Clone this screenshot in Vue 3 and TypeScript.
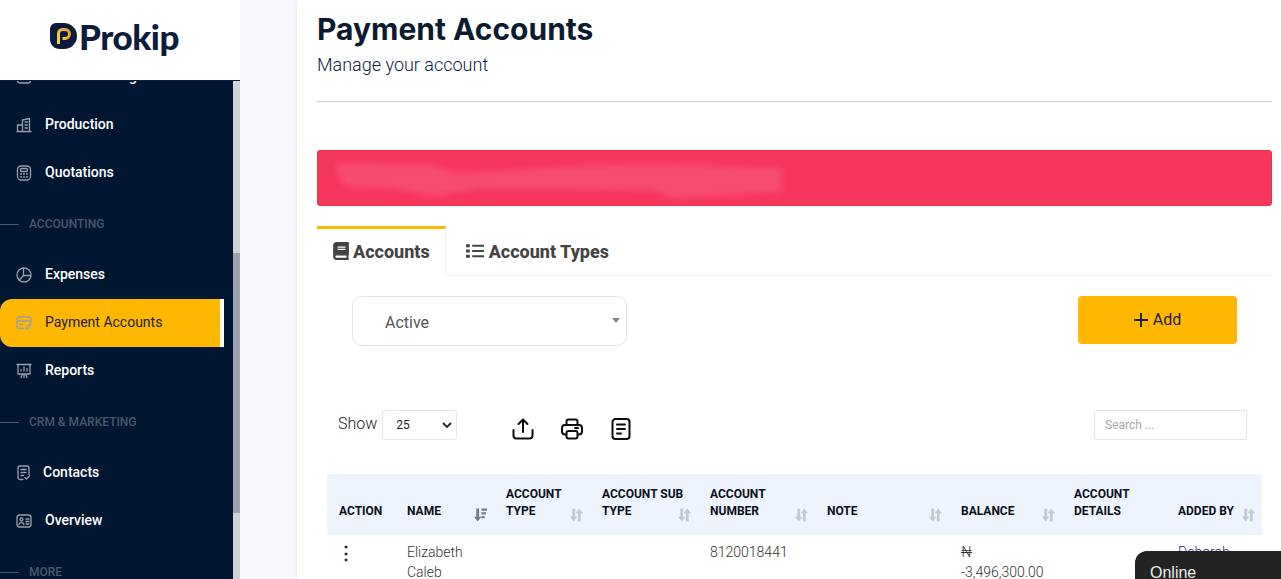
<template>
  <div class="page">
    <aside class="sidebar">
      <div class="brand">
        <svg class="brand-mark" viewBox="0 0 27 27" width="27" height="27">
          <defs>
            <linearGradient id="markFill" x1="0" y1="1" x2="1" y2="0">
              <stop offset="0" stop-color="#f9d838" />
              <stop offset="1" stop-color="#ee9f22" />
            </linearGradient>
          </defs>
          <path d="M0 6a6 6 0 0 1 6-6h8a13 13 0 0 1 13 13 13 13 0 0 1-13 13H10C4 26 0 22 0 16Z" fill="#0c1c3d" />
          <path d="M8.500 21V10.500a4 4 0 0 1 4-4h2.500a4.500 4.500 0 0 1 0 9h-2.500" fill="none" stroke="url(#markFill)" stroke-width="3" />
        </svg>
        <span class="brand-name">Prokip</span>
      </div>
      <div class="nav-wrap">
        <nav class="nav">
          <template v-for="row in navRows" :key="row.label">
            <div v-if="row.section" class="nav-section">
              <span class="nav-section-line"></span>{{ row.label }}
            </div>
            <a v-else class="nav-item" :class="{ active: row.active, tight: row.label === 'Contacts' }">
              <svg class="nav-icon" viewBox="0 0 16 16" width="16" height="16" v-html="row.icon"></svg>
              <span class="nav-label">{{ row.label }}</span>
            </a>
          </template>
        </nav>
        <div class="scroll-track"><div class="scroll-thumb"></div></div>
      </div>
    </aside>

    <div class="gutter"></div>

    <main class="main">
      <header class="head">
        <h1>Payment Accounts</h1>
        <p>Manage your account</p>
      </header>

      <div class="alert">
        <svg class="smear" viewBox="0 0 450 38" width="450" height="38">
          <path d="M2 2 L100 3 L125 12 L240 4 L350 3 L448 6 L448 30 L340 36 L320 28 L150 26 L100 34 L60 26 L10 24 Z" fill="#fff" fill-opacity="0.11" />
        </svg>
      </div>

      <div class="tabs">
        <button class="tab active">
          <svg viewBox="0 0 448 512" width="16" height="18"><path d="M448 360V24c0-13.300-10.700-24-24-24H96C43 0 0 43 0 96v320c0 53 43 96 96 96h328c13.300 0 24-10.700 24-24v-16c0-7.500-3.500-14.300-8.900-18.700-4.200-15.400-4.200-59.300 0-74.700 5.400-4.300 8.900-11.100 8.900-18.600zM128 134c0-3.300 2.700-6 6-6h212c3.300 0 6 2.700 6 6v20c0 3.300-2.700 6-6 6H134c-3.300 0-6-2.700-6-6v-20zm0 64c0-3.300 2.700-6 6-6h212c3.300 0 6 2.700 6 6v20c0 3.300-2.700 6-6 6H134c-3.300 0-6-2.700-6-6v-20zm253.400 250H96c-17.700 0-32-14.300-32-32 0-17.600 14.400-32 32-32h285.400c-1.900 17.100-1.900 46.900 0 64z" fill="#444" /></svg>
          Accounts
        </button>
        <button class="tab">
          <svg viewBox="0 0 20 16" width="19" height="16"><path d="M0 1h4v3H0zM0 6.500h4v3H0zM0 12h4v3H0zM6.500 1.500H19v2H6.500zM6.500 7H19v2H6.500zM6.500 12.500H19v2H6.500z" fill="#444" /></svg>
          Account Types
        </button>
        <div class="tabs-rest"></div>
      </div>

      <div class="filter-row">
        <div class="status-select">
          Active
          <span class="caret"></span>
        </div>
        <button class="add-btn">
          <svg viewBox="0 0 14 14" width="14" height="14"><path d="M7 0v14M0 7h14" stroke="#0c1c3d" stroke-width="1.800" /></svg>
          Add
        </button>
      </div>

      <div class="tools-row">
        <label class="show">
          <span class="show-text">Show</span>
          <span class="show-select">25
            <svg viewBox="0 0 10 6" width="10" height="6"><path d="M1 1l4 4 4-4" fill="none" stroke="#222" stroke-width="1.800" /></svg>
          </span>
        </label>
        <div class="tool-icons">
          <svg viewBox="0 0 22 22" width="22" height="22"><path d="M11 14V2M6.500 6L11 1.500 15.500 6M1.500 12v5.500a3 3 0 0 0 3 3h13a3 3 0 0 0 3-3V12" fill="none" stroke="#0d0d0d" stroke-width="2" stroke-linecap="round" stroke-linejoin="round" /></svg>
          <svg viewBox="0 0 22 22" width="22" height="22"><path d="M5.500 7V3.500a2 2 0 0 1 2-2h7a2 2 0 0 1 2 2V7M5.500 16.500H4a3 3 0 0 1-3-3V10a3 3 0 0 1 3-3h14a3 3 0 0 1 3 3v3.500a3 3 0 0 1-3 3h-1.500M7.500 13h7a2 2 0 0 1 2 2v3.500a2 2 0 0 1-2 2h-7a2 2 0 0 1-2-2V15a2 2 0 0 1 2-2ZM14 10h3" fill="none" stroke="#0d0d0d" stroke-width="2" stroke-linecap="round" /></svg>
          <svg viewBox="0 0 22 22" width="22" height="22"><path d="M5.500 1h11a3 3 0 0 1 3 3v14a3 3 0 0 1-3 3h-11a3 3 0 0 1-3-3V4a3 3 0 0 1 3-3ZM7 6.500h8M7 11h8M7 15.500h4" fill="none" stroke="#0d0d0d" stroke-width="2" stroke-linecap="round" /></svg>
        </div>
        <input class="search" type="text" placeholder="Search ..." />
      </div>

      <table class="accounts">
        <colgroup>
          <col v-for="c in columns" :key="c.label" :style="{ width: c.width + 'px' }" />
        </colgroup>
        <thead>
          <tr>
            <th v-for="c in columns" :key="c.label">
              {{ c.label }}
              <svg v-if="c.sort" class="sort" viewBox="0 0 14 14" width="13" height="14">
                <template v-if="c.sort === 'desc'">
                  <path d="M2.500 0h3v9H8L4 14 0 9h2.500Z" fill="#737a86" />
                  <path d="M8 0h6v2.500H8ZM8 4h4.800v2.500H8ZM8 8h3.400v2.500H8Z" fill="#737a86" />
                </template>
                <template v-else>
                  <path d="M2.500 0h3v9H8L4 14 0 9h2.500Z" fill="#c3c9d3" />
                  <path d="M8.500 14h3V5H14L10 0 6 5h2.500Z" fill="#c3c9d3" />
                </template>
              </svg>
            </th>
          </tr>
        </thead>
        <tbody>
          <tr>
            <td class="dots">⋮</td>
            <td>Elizabeth Caleb</td>
            <td></td>
            <td></td>
            <td>8120018441</td>
            <td></td>
            <td><s class="naira">₦</s><br />-3,496,300.00</td>
            <td></td>
            <td class="added">Deborah</td>
          </tr>
        </tbody>
      </table>
    </main>

    <div class="chat-tab">Online</div>
  </div>
</template>

<script setup lang="ts">
type NavRow = { label: string; section?: boolean; active?: boolean; icon?: string };

const s = 'fill="none" stroke="currentColor" stroke-width="1.300" stroke-linecap="round" stroke-linejoin="round"';

const navRows: NavRow[] = [
  { label: "Manufacturing", icon: `<rect x="1.500" y="2" width="13" height="12" rx="2.500" ${s}/>` },
  { label: "Production", icon: `<path d="M1.500 14.500V8h5v6.500M6.500 14.500V3l7-1.500v13ZM1 14.500h14M9 5h2.500M9 8h2.500M9 11h2.500" ${s}/>` },
  { label: "Quotations", icon: `<rect x="1.500" y="1" width="13" height="14" rx="3.500" ${s}/><rect x="4.500" y="3.500" width="7" height="3" rx="1" ${s}/><path d="M4.500 9h1M7.500 9h1M10.500 9h1M4.500 12h1M7.500 12h1M10.500 12h1" ${s}/>` },
  { label: "ACCOUNTING", section: true },
  { label: "Expenses", icon: `<circle cx="8" cy="8" r="7" ${s}/><path d="M7.500 1.500V8.500L3 13.500M7.500 8.500L14.500 8.500" ${s}/>` },
  { label: "Payment Accounts", active: true, icon: `<path d="M7.500 13.500H3A2 2 0 0 1 1 11.500V4a2 2 0 0 1 2-2h10a2 2 0 0 1 2 2v4M1 6h14M3.500 9.500h3M10 14l.5-2 3-3 1.500 1.500-3 3Z" ${s}/>` },
  { label: "Reports", icon: `<path d="M1 1.500h14M2 1.500v9.500h12V1.500M5 8V6.500M8 8V4M11 8V5.500M8 11v3.500M5 14.500l1.500-3.500M11 14.500L9.500 11" ${s}/>` },
  { label: "CRM & MARKETING", section: true },
  { label: "Contacts", icon: `<path d="M7 14.500H4A2 2 0 0 1 2 12.500V3a2 2 0 0 1 2-2h7a2 2 0 0 1 2 2v6.500M5 4.500h5M5 7.500h5M5 10.500h2.500M9 12.500l1.500 1.500 3-3" ${s}/>` },
  { label: "Overview", icon: `<rect x="1" y="2" width="14" height="12" rx="2.500" ${s}/><circle cx="5.500" cy="6.500" r="1.500" ${s}/><path d="M3 11.500c.5-2.500 4.500-2.500 5 0M10 6h3M10 8.500h3M10 11h3" ${s}/>` },
  { label: "MORE", section: true },
];

const columns = [
  { label: "ACTION", width: 68, sort: "" },
  { label: "NAME", width: 99, sort: "desc" },
  { label: "ACCOUNT TYPE", width: 96, sort: "both" },
  { label: "ACCOUNT SUB TYPE", width: 108, sort: "both" },
  { label: "ACCOUNT NUMBER", width: 117, sort: "both" },
  { label: "NOTE", width: 134, sort: "both" },
  { label: "BALANCE", width: 113, sort: "both" },
  { label: "ACCOUNT DETAILS", width: 104, sort: "" },
  { label: "ADDED BY", width: 96, sort: "both" },
];
</script>

<style>
html,
body {
  margin: 0;
  overflow: hidden;
}
</style>

<style scoped>
.page {
  position: relative;
  display: flex;
  height: 579px;
  overflow: hidden;
  font-family: Roboto, "Liberation Sans", sans-serif;
  background: #f7f8fd;
}

.sidebar {
  flex: 0 0 240px;
  display: flex;
  flex-direction: column;
}

.brand {
  flex: 0 0 80px;
  box-sizing: border-box;
  display: flex;
  align-items: center;
  gap: 2px;
  padding: 0 0 8px 50px;
  background: #fff;
}

.brand-mark {
  margin-top: 1px;
}

.brand-name {
  font-family: Lato, sans-serif;
  font-weight: 900;
  font-size: 35px;
  letter-spacing: -0.5px;
  color: #0c1c3d;
}

.nav-wrap {
  flex: 1;
  display: flex;
  min-height: 0;
  overflow: hidden;
  border-top: 1px solid #0c1c3d;
  background: #011631;
}

.nav {
  flex: 1;
  margin-top: -28px;
  height: 600px;
}

.nav-item {
  display: flex;
  align-items: center;
  height: 48px;
  margin-right: 9px;
  padding-left: 16px;
  box-sizing: border-box;
  color: #fff;
  font-size: 14px;
  font-weight: 500;
}

.nav-label {
  margin-top: -2px;
}

.nav-item.active {
  background: #ffb700;
  color: #1a2233;
  font-weight: 400;
  border-radius: 12px 0 0 12px;
  border-right: 4px solid #fff;
}

.nav-icon {
  flex: none;
  color: #9a9fa9;
  margin-right: 13px;
}

.nav-item.tight .nav-icon {
  margin-right: 11px;
}

.nav-section {
  display: flex;
  align-items: center;
  height: 54px;
  color: #4a5669;
  font-size: 12px;
  font-weight: 500;
}

.nav-section-line {
  width: 19px;
  height: 1px;
  margin-right: 10px;
  background: #4a5669;
}

.scroll-track {
  flex: 0 0 7px;
  background: #d1d3d8;
}

.scroll-thumb {
  height: 260px;
  margin-top: 172px;
  background: #9fa2ae;
}

.gutter {
  flex: 0 0 57px;
}

.main {
  flex: 1;
  min-width: 0;
  padding: 0 9px 0 20px;
  background: #fff;
  box-shadow: -2px 0 4px rgba(20, 30, 60, 0.04);
}

.head {
  height: 101px;
  margin-bottom: 48px;
  border-bottom: 1px solid #cfcfcf;
}

.head h1 {
  margin: 0;
  padding-top: 12px;
  font-family: Inter, sans-serif;
  font-size: 30px;
  line-height: 35px;
  font-weight: 700;
  color: #0c1c30;
}

.head p {
  margin: 0;
  padding-top: 1px;
  font-size: 18px;
  line-height: 34px;
  font-weight: 300;
  color: #0c1c3d;
}

.alert {
  display: flex;
  align-items: center;
  height: 56px;
  box-sizing: border-box;
  padding: 6px 0 0 15px;
  background: #f7365f;
  border: 1px solid #e5392f;
  border-radius: 3px;
}

.smear {
  filter: blur(3px);
}

.tabs {
  display: flex;
  height: 50px;
  margin-top: 20px;
}

.tab {
  display: flex;
  align-items: center;
  gap: 4px;
  padding: 3px 16px 2px 20px;
  background: none;
  border: 0;
  border-bottom: 1px solid #f1f1f1;
  font: 800 18px Roboto, sans-serif;
  color: #444;
}

.tab.active {
  border-top: 3px solid #ffb700;
  border-right: 1px solid #f1f1f1;
  border-bottom-color: transparent;
  padding: 0 15px 2px 16px;
}

.tabs-rest {
  flex: 1;
  border-bottom: 1px solid #f1f1f1;
}

.filter-row {
  display: flex;
  justify-content: space-between;
  align-items: flex-start;
  padding: 20px 35px 0;
}

.status-select {
  position: relative;
  display: flex;
  align-items: center;
  width: 275px;
  height: 50px;
  box-sizing: border-box;
  padding: 2px 0 0 32px;
  border: 1px solid #e3e3e3;
  border-radius: 10px;
  font-size: 16px;
  color: #555;
}

.caret {
  position: absolute;
  right: 6px;
  top: 21px;
  border: 4px solid transparent;
  border-top: 5px solid #888;
  border-bottom: 0;
}

.add-btn {
  display: flex;
  align-items: center;
  justify-content: center;
  gap: 5px;
  width: 159px;
  height: 48px;
  padding: 0 0 2px;
  border: 0;
  border-radius: 4px;
  background: #ffb700;
  font: 400 16px Roboto, sans-serif;
  color: #1a2233;
}

.add-btn svg {
  margin-top: 2px;
}

.tools-row {
  display: flex;
  align-items: center;
  height: 30px;
  margin-top: 64px;
  padding: 0 25px 0 21px;
}

.show {
  display: flex;
  align-items: center;
  gap: 5px;
  font-size: 16px;
  font-weight: 300;
  color: #222;
}

.show-text {
  margin-bottom: 4px;
}

.show-select {
  display: flex;
  align-items: center;
  justify-content: space-between;
  width: 75px;
  height: 30px;
  box-sizing: border-box;
  padding: 0 4px 0 13px;
  border: 1px solid #e6e6e6;
  border-radius: 3px;
  font-size: 12px;
  font-weight: 400;
}

.tool-icons {
  display: flex;
  gap: 27px;
  margin: 8px 0 0 55px;
}

.search {
  width: 153px;
  height: 30px;
  box-sizing: border-box;
  margin-left: auto;
  padding: 0 10px;
  border: 1px solid #e6e6e6;
  border-radius: 2px;
  font: 400 12px Roboto, sans-serif;
}

.search::placeholder {
  color: #a8a8a8;
}

.accounts {
  width: 935px;
  margin: 34px 0 0 10px;
  table-layout: fixed;
  border-collapse: collapse;
}

.accounts th {
  position: relative;
  height: 61px;
  box-sizing: border-box;
  padding: 0 12px 15px;
  vertical-align: bottom;
  background: #eef4fd;
  font-size: 12px;
  line-height: 17px;
  font-weight: 700;
  text-align: left;
  color: #0a0f1c;
}

.sort {
  position: absolute;
  right: 7px;
  top: 34px;
}

.accounts td {
  padding: 7px 12px;
  vertical-align: top;
  font-size: 14px;
  line-height: 20px;
  font-weight: 300;
  color: #333;
}

.accounts td.dots {
  padding: 8px 0 0 10px;
  font-weight: 700;
  font-size: 18px;
  color: #1a1a3a;
}

.naira {
  color: #333;
}

.accounts td.added {
  color: #14287a;
}

.chat-tab {
  position: absolute;
  right: 0;
  bottom: 0;
  width: 146px;
  height: 28px;
  box-sizing: border-box;
  padding: 12px 0 0 15px;
  background: #222424;
  border-radius: 12px 0 0 0;
  font: 400 16px "Liberation Sans", sans-serif;
  line-height: 19px;
  color: #eee;
}
</style>
